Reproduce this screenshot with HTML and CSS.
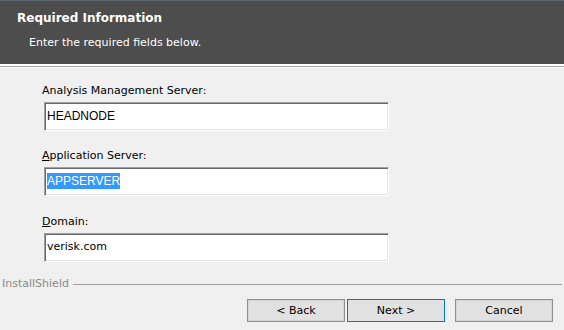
FILE: index.html
```html
<!DOCTYPE html>
<html lang="en">
<head>
    <meta charset="UTF-8">
    <meta name="viewport" content="width=device-width, initial-scale=1.0">
    <title>Required Information</title>
    <link rel="stylesheet" href="styles.css">
</head>
<body>
    <div class="wizard">
        <div class="header">
            <div class="header-title">Required Information</div>
            <div class="header-subtitle">Enter the required fields below.</div>
        </div>
        <div class="header-rule"></div>

        <div class="form">
            <div class="field">
                <div class="field-label">Analysis Management Server:</div>
                <div class="textbox"><span class="value-sans">HEADNODE</span></div>
            </div>
            <div class="field">
                <div class="field-label"><u>A</u>pplication Server:</div>
                <div class="textbox"><span class="value-sans selected">APPSERVER</span></div>
            </div>
            <div class="field">
                <div class="field-label"><u>D</u>omain:</div>
                <div class="textbox"><span class="value-tahoma">verisk.com</span></div>
            </div>
        </div>

        <div class="brand-rule">InstallShield</div>

        <div class="buttons">
            <button class="wiz-button">&lt; Back</button>
            <button class="wiz-button default">Next &gt;</button>
            <button class="wiz-button cancel">Cancel</button>
        </div>
    </div>
</body>
</html>
```

FILE: styles.css
```css
body {
    margin: 0;
    background: #f0f0f0;
    font-family: "DejaVu Sans", Tahoma, sans-serif;
    font-size: 11px;
    color: #000;
}

.wizard {
    width: 564px;
    height: 330px;
    display: flex;
    flex-direction: column;
    overflow: hidden;
}

.header {
    height: 64px;
    background: #4d4d4d;
    border-top: 1px solid #5c666e;
    color: #fff;
    box-sizing: border-box;
    padding: 10px 0 0 17px;
}

.header-title {
    font-weight: bold;
    font-size: 12px;
    line-height: 14px;
}

.header-subtitle {
    margin: 11px 0 0 12px;
    line-height: 14px;
}

.header-rule {
    height: 2px;
    background: #fff;
    border-bottom: 1px solid #a0a0a0;
    margin-bottom: 1px;
    box-shadow: 0 1px 0 #fff;
}

.form {
    display: flex;
    flex-direction: column;
    gap: 18px;
    padding: 16px 0 0 42px;
}

.field-label {
    line-height: 14px;
    margin-bottom: 4px;
}

.field:last-child {
    margin-top: 1px;
}

.textbox {
    width: 345px;
    height: 29px;
    margin-left: 2px;
    box-sizing: border-box;
    background: #fff;
    border: 1px solid;
    border-color: #a0a0a0 #fff #fff #a0a0a0;
    box-shadow: inset 1px 1px 0 #696969, inset -1px -1px 0 #e3e3e3;
    padding: 6px 0 0 2px;
    line-height: 14px;
}

.value-sans {
    font-family: "Liberation Sans", Arial, sans-serif;
    font-size: 12px;
}

.value-tahoma {
    font-size: 11px;
}

.selected {
    background: #3399ff;
    color: #fff;
    padding: 1px 0;
}

.brand-rule {
    display: flex;
    align-items: center;
    gap: 4px;
    margin-top: 15px;
    padding: 0 2px;
    line-height: 14px;
    color: #8a8a8a;
}

.brand-rule::after {
    content: "";
    flex: 1;
    border-top: 1px solid #a0a0a0;
}

.buttons {
    display: flex;
    justify-content: flex-end;
    gap: 2px;
    margin-top: 8px;
    padding-right: 11px;
}

.wiz-button {
    width: 98px;
    height: 23px;
    background: #e1e1e1;
    border: 1px solid #8f8f8f;
    box-shadow: inset 0 0 0 1px #d4d4d4;
    font-family: "DejaVu Sans", Tahoma, sans-serif;
    font-size: 11px;
    color: #000;
    padding: 0;
}

.wiz-button.default {
    border-color: #0078d7;
    box-shadow: none;
}

.wiz-button.cancel {
    margin-left: 8px;
}
```
